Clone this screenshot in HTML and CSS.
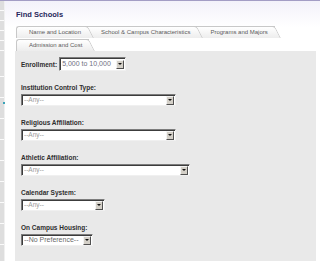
FILE: index.html
```html
<!DOCTYPE html>
<html>
<head>
<meta charset="utf-8">
<link rel="stylesheet" href="styles.css">
</head>
<body>
<div class="page">
  <div class="sidebar"><span class="dot"></span></div>
  <div class="main">
    <div class="title">Find Schools</div>
    <div class="tab-row">
      <div class="tab t1">Name and Location</div>
      <div class="tab t2">School &amp; Campus Characteristics</div>
      <div class="tab t3">Programs and Majors</div>
    </div>
    <div class="tab-row row2">
      <div class="tab t1">Admission and Cost</div>
    </div>
    <div class="panel">
      <div class="inline-field">
        <span class="label">Enrollment:</span>
        <div class="select s-enroll"><span class="value dark">5,000 to 10,000</span><span class="btn"></span></div>
      </div>
      <div class="field">
        <div class="label">Institution Control Type:</div>
        <div class="select s-155"><span class="value">--Any--</span><span class="btn"></span></div>
      </div>
      <div class="field">
        <div class="label">Religious Affiliation:</div>
        <div class="select s-155"><span class="value">--Any--</span><span class="btn"></span></div>
      </div>
      <div class="field">
        <div class="label">Athletic Affiliation:</div>
        <div class="select s-169"><span class="value">--Any--</span><span class="btn"></span></div>
      </div>
      <div class="field">
        <div class="label">Calendar System:</div>
        <div class="select s-84"><span class="value">--Any--</span><span class="btn"></span></div>
      </div>
      <div class="field">
        <div class="label">On Campus Housing:</div>
        <div class="select s-72"><span class="value big">--No Preference--</span><span class="btn"></span></div>
      </div>
    </div>
  </div>
</div>
</body>
</html>
```
FILE: styles.css
```css
html, body {
  margin: 0;
  padding: 0;
  background: #fff;
  overflow: hidden;
}
body {
  width: 320px;
  height: 261px;
  font-family: "Liberation Sans", Arial, sans-serif;
}
.page {
  display: flex;
  height: 260px;
  border-top: 1px solid #a39dc4;
}
.sidebar {
  position: relative;
  width: 4px;
  border-right: 1px solid #f0f0f0;
  background:
    repeating-linear-gradient(#dedede 0, #dedede 9px, #fbfbfb 9px, #fbfbfb 10px) top / 4px 55px no-repeat,
    repeating-linear-gradient(#dedede 0, #dedede 20px, #fbfbfb 20px, #fbfbfb 21px) 0 55px / 4px 205px no-repeat;
}
.dot {
  position: absolute;
  left: 3px;
  top: 101px;
  width: 2px;
  height: 2px;
  background: #3aa3b8;
}
.main {
  flex: 1;
  display: flex;
  flex-direction: column;
  padding: 0 4px 0 10px;
  background: linear-gradient(#f3f2fa, #fff 26px);
}
.title {
  height: 25px;
  padding-left: 1px;
  box-sizing: border-box;
  padding-top: 9px;
  font-weight: bold;
  font-size: 7.5px;
  line-height: 9px;
  color: #26265a;
}
.tab-row {
  display: flex;
  height: 12px;
  padding-left: 1px;
}
.row2 {
  margin-top: 1px;
}
.tab {
  position: relative;
  height: 11px;
  line-height: 11px;
  font-size: 6px;
  color: #5a5a5a;
  padding: 0 7px 0 12px;
  background: linear-gradient(#ffffff, #ededed);
  border-top: 1px solid #c8c8c8;
  border-left: 1px solid #c8c8c8;
  border-top-left-radius: 3px;
  white-space: nowrap;
}
.tab::after {
  content: "";
  position: absolute;
  top: -1px;
  bottom: 0;
  right: -6px;
  width: 8px;
  background: linear-gradient(#ffffff, #ededed);
  border-top: 1px solid #c8c8c8;
  border-right: 1px solid #c8c8c8;
  border-top-right-radius: 3px;
  transform: skewX(27deg);
  transform-origin: bottom left;
}
.tab-row .t2, .tab-row .t3 {
  border-left: 0;
  border-radius: 0;
  padding-left: 13px;
}
.t1 { z-index: 3; }
.t2 { z-index: 2; }
.t3 { z-index: 1; }
.panel {
  flex: 1;
  background: #e9e9e9;
  padding: 6px 6px 0 6px;
  display: flex;
  flex-direction: column;
}
.inline-field {
  display: flex;
  align-items: center;
  gap: 2px;
  height: 14px;
  margin-bottom: 12px;
}
.field {
  display: flex;
  flex-direction: column;
  align-items: flex-start;
  gap: 2px;
  height: 35px;
}
.label {
  font-weight: bold;
  font-size: 6.5px;
  line-height: 9px;
  color: #2e2e2e;
}
.select {
  display: flex;
  align-items: center;
  height: 12px;
  box-sizing: border-box;
  background: #fff;
  border: 1px solid;
  border-color: #7c7c7c #f0f0f0 #f0f0f0 #7c7c7c;
  box-shadow: inset 1px 1px 0 #3c3c3c;
  padding: 1px 1px 1px 2px;
}
.s-enroll { width: 67px; height: 14px; }
.s-155 { width: 155px; }
.s-169 { width: 169px; }
.s-84 { width: 84px; }
.s-72 { width: 72px; }
.value {
  flex: 1;
  font-size: 6.5px;
  line-height: 8px;
  color: #9a9a9a;
  white-space: nowrap;
  overflow: hidden;
}
.value.dark { color: #6f6f80; font-size: 7px; }
.value.big { color: #6a6a6a; font-size: 7px; }
.btn {
  position: relative;
  width: 8px;
  height: 9px;
  box-sizing: border-box;
  background: #d4d0c8;
  border: 1px solid;
  border-color: #f4f4f4 #505050 #505050 #f4f4f4;
}
.btn::after {
  content: "";
  position: absolute;
  left: 1px;
  top: 2px;
  border-left: 2px solid transparent;
  border-right: 2px solid transparent;
  border-top: 2px solid #111;
}
```
